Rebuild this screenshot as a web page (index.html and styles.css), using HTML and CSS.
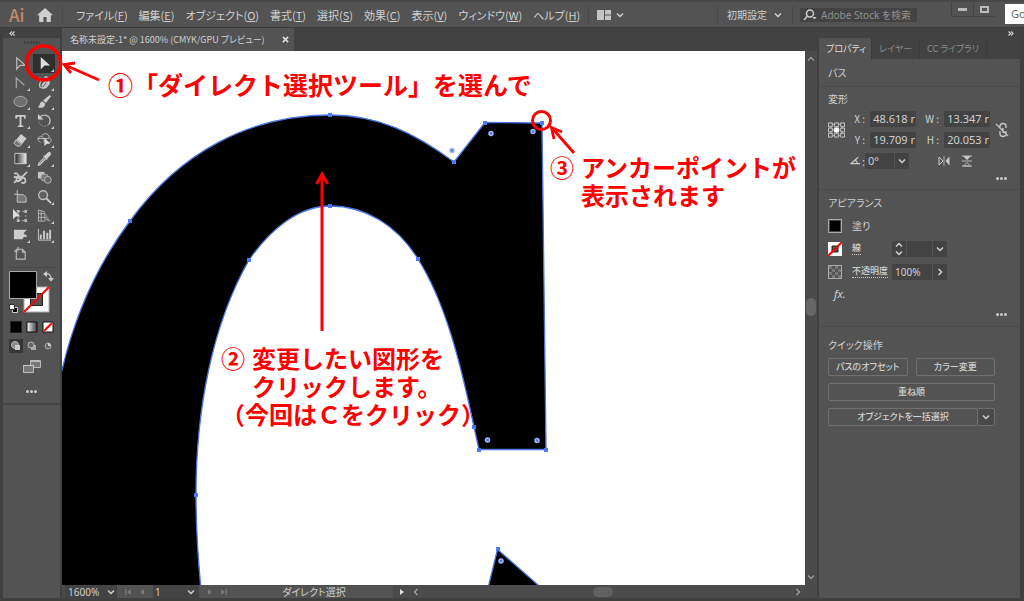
FILE: index.html
```html
<!DOCTYPE html>
<html lang="ja">
<head>
<meta charset="utf-8">
<title>名称未設定-1</title>
<link rel="stylesheet" href="styles.css">
</head>
<body>
<svg class="defs" aria-hidden="true">
  <defs>
    <symbol id="down" viewBox="0 0 8 8"><path d="M1 2.5 4 5.5 7 2.5" fill="none" stroke="currentColor" stroke-width="1.5"/></symbol>
    <symbol id="up" viewBox="0 0 8 8"><path d="M1 5.5 4 2.5 7 5.5" fill="none" stroke="currentColor" stroke-width="1.5"/></symbol>
    <symbol id="right" viewBox="0 0 8 8"><path d="M2.5 1 5.5 4 2.5 7" fill="none" stroke="currentColor" stroke-width="1.5"/></symbol>
    <symbol id="left" viewBox="0 0 8 8"><path d="M5.5 1 2.5 4 5.5 7" fill="none" stroke="currentColor" stroke-width="1.5"/></symbol>
    <symbol id="first" viewBox="0 0 8 8"><path d="M7 1v6L3 4zM1 1h1.3v6H1z" fill="currentColor"/></symbol>
    <symbol id="prev" viewBox="0 0 8 8"><path d="M6 1v6L2 4z" fill="currentColor"/></symbol>
    <symbol id="next" viewBox="0 0 8 8"><path d="M2 1v6l4-3z" fill="currentColor"/></symbol>
    <symbol id="last" viewBox="0 0 8 8"><path d="M1 1v6l4-3zM5.7 1H7v6H5.7z" fill="currentColor"/></symbol>
    <symbol id="none" viewBox="0 0 14 14"><path d="M0 0h14v14H0z" fill="#fff"/><path d="M4 4h6v6H4z" fill="#535353" stroke="#222"/><path d="M0 14 14 0" stroke="#f00" stroke-width="2"/></symbol>
    <linearGradient id="grad"><stop offset="0" stop-color="#222"/><stop offset="1" stop-color="#eee"/></linearGradient>
    <linearGradient id="grad-light"><stop offset="0" stop-color="#fff"/><stop offset="1" stop-color="#333"/></linearGradient>
  </defs>
</svg>

<div class="app">
  <header class="menubar">
    <span class="brand">Ai</span>
    <button class="home" aria-label="ホーム"><svg viewBox="0 0 16 14"><path d="M8 0 0 7.2h2.2V14h4.2V9h3.2v5h4.2V7.2H16z" fill="#d0d0d0"/></svg></button>
    <nav class="menus">
      <button>ファイル(<u>F</u>)</button><button>編集(<u>E</u>)</button><button>オブジェクト(<u>O</u>)</button><button>書式(<u>T</u>)</button><button>選択(<u>S</u>)</button><button>効果(<u>C</u>)</button><button>表示(<u>V</u>)</button><button>ウィンドウ(<u>W</u>)</button><button>ヘルプ(<u>H</u>)</button>
    </nav>
    <button class="arrange" aria-label="ドキュメントの配置"><svg class="layout-icon" viewBox="0 0 14 10"><path d="M0 0h7v10H0zM8 0h6v4.500H8zM8 5.500h6V10H8z" fill="#c4c4c4"/></svg><svg class="chev"><use href="#down"/></svg></button>
    <button class="workspace">初期設定<svg class="chev"><use href="#down"/></svg></button>
    <label class="stock"><svg viewBox="0 0 14 12"><circle cx="7" cy="4.500" r="3.500" fill="none" stroke="#ccc" stroke-width="1.500"/><path d="M4.500 7 1 11" stroke="#ccc" stroke-width="1.500"/><path d="M9.500 8h4l-2 2.500z" fill="#ccc"/></svg><input aria-label="Adobe Stock を検索" placeholder="Adobe Stock を検索"></label>
    <div class="window-buttons">
      <button aria-label="最小化"><i class="minimize"></i></button><button aria-label="元に戻す"><i class="restore"></i></button><span class="go">Go</span>
    </div>
  </header>

  <main class="workspace-area">
    <aside class="tools">
      <div class="collapse"><svg viewBox="0 0 6 5"><path d="M3 .5 1 2.500l2 2M5.500.500l-2 2 2 2" fill="none" stroke="#ccc" stroke-width="1.200"/></svg></div>
      <div class="grip"></div>
      <div class="tool-grid">
        <button aria-label="選択"><svg viewBox="0 0 16 16"><path d="M4 2v12l3.500-4H13z" fill="none" stroke="#bbb" stroke-width="1.300"/></svg></button>
        <button class="more active" aria-label="ダイレクト選択"><svg viewBox="0 0 16 16"><path d="M4 1v13.500l4-4.500h6z" fill="#ddd"/></svg></button>
        <button class="more" aria-label="アンカーポイント"><svg viewBox="0 0 16 16"><path d="M3.500 14V3L12 11" fill="none" stroke="#aaa" stroke-width="1.300"/></svg></button>
        <button class="more" aria-label="曲線"><svg viewBox="0 0 16 16"><path d="M1 6q1-4 3-2 1 2-1 5-1 5 2 4M8 3q3-3 3 1" fill="none" stroke="#c5c5c5" stroke-width="1.500"/><path d="m5 10 5-6 4-2-1 4 1 3-4 5-5 1z" fill="#c5c5c5"/><path d="m6 13 4-5" stroke="#535353"/></svg></button>
        <button class="more" aria-label="楕円形"><svg viewBox="0 0 16 16"><ellipse cx="8" cy="8" rx="7" ry="5.500" fill="#707070" stroke="#aaa"/></svg></button>
        <button class="more" aria-label="ブラシ"><svg viewBox="0 0 16 16"><path d="M13.500 1 6.500 7l3 2.500L15 2.500zM6 8C2.500 8 4 12 1 14c4 1.500 8 0 7.500-4z" fill="#ccc"/></svg></button>
        <button class="more" aria-label="文字"><svg viewBox="0 0 16 16"><path d="M2.500 2h11v4H12l-.500-2H9v9l2 .500V15H5v-1.500L7 13V4H4.500L4 6H2.500z" fill="#ccc"/></svg></button>
        <button class="more" aria-label="回転"><svg viewBox="0 0 16 16"><path d="M3 5a6 6 0 0 1 11 3 6 6 0 0 1-2 4.500" fill="none" stroke="#bbb" stroke-width="1.500"/><path d="M12 12.500A6 6 0 0 1 2 9" fill="none" stroke="#aaa" stroke-dasharray="1.500"/><path d="M1 1v6h6z" fill="#ccc"/></svg></button>
        <button class="more" aria-label="消しゴム"><svg viewBox="0 0 16 16"><path d="m8.500 2 6 5-5 6-6-5z" fill="#ccc"/><path d="m3 8.500 6 5-2 1.500H4l-3-3z" fill="#777" stroke="#ccc"/></svg></button>
        <button class="more" aria-label="シェイプ形成"><svg viewBox="0 0 16 16"><path d="M4 11C-1 9 1 4 5 5c1-5 8-4 8 1 3 1 3 5 0 5H9M1 7h12M5 5c3 1 3 4 2 6" fill="none" stroke="#bbb"/><path d="M8 6v9l2.500-2.500H14z" fill="#ddd"/></svg></button>
        <button class="more" aria-label="グラデーション"><svg viewBox="0 0 16 16"><path d="M2 2.500h12v11H2z" fill="url(#grad)" stroke="#ccc"/></svg></button>
        <button class="more" aria-label="スポイト"><svg viewBox="0 0 16 16"><path d="m8 5 3-3q2-2 3.500-.500T14 5l-3 3 .500.500-1 1-4-4 1-1z" fill="#ccc"/><path d="m8 7-6 6-.500 2L3 14.500l6-6" fill="none" stroke="#ccc" stroke-width="1.300"/></svg></button>
        <button aria-label="パペットワープ"><svg viewBox="0 0 16 16"><path d="M1 3.500h3l3 3.500h3l5-5M1 8q3-2 3 1T1 13.500M4 12q4 0 6-4 4 0 3 5-2 2-4 0" fill="none" stroke="#c5c5c5" stroke-width="1.900"/><path d="m4 7 5 3" stroke="#c5c5c5" stroke-width="3"/></svg></button>
        <button aria-label="ブレンド"><svg viewBox="0 0 16 16"><path d="M1 2h7v7H1z" fill="#c5c5c5"/><rect x="4.500" y="4.500" width="7" height="7" rx="2" fill="#777" stroke="#aaa"/><circle cx="11.500" cy="10.500" r="3.700" fill="#666" stroke="#bbb"/></svg></button>
        <button aria-label="アートボード"><svg viewBox="0 0 16 16"><path d="M1 5.500h5M4.500 1v5M4.500 6H11l3 3v5H4.500z" fill="#777" stroke="#c5c5c5"/></svg></button>
        <button class="more" aria-label="ズーム"><svg viewBox="0 0 16 16"><circle cx="6.500" cy="6.500" r="4.700" fill="#606060" stroke="#bbb" stroke-width="1.500"/><path d="m10 10 5 5" stroke="#ccc" stroke-width="2"/></svg></button>
        <button aria-label="自由変形"><svg viewBox="0 0 16 16"><path d="M5.500 3.500h8v10h-8z" fill="none" stroke="#bbb" stroke-dasharray="2"/><path d="M4 2h3v3H4zM12 2h3v3h-3zM4 12h3v3H4zM12 12h3v3h-3z" fill="#bbb"/><path d="M0 1v11l3-3h5z" fill="#ddd"/></svg></button>
        <button class="more" aria-label="遠近グリッド"><svg viewBox="0 0 16 16"><path d="M1.500 2v12H8V4zM1.500 6H8M1.500 10H8M4.500 3v11" fill="none" stroke="#b5b5b5"/><path d="m8 4 7 10H8z" fill="#777"/><path d="m8 9 5 5" stroke="#aaa"/></svg></button>
        <button class="more" aria-label="画像切り抜き"><svg viewBox="0 0 16 16"><path d="M1 3h14q-5 4-3 5 2-1 3 3-4-2-5 2H1z" fill="#ccc"/></svg></button>
        <button class="more" aria-label="グラフ"><svg viewBox="0 0 16 16"><path d="M1.500 2v12H15" fill="none" stroke="#ccc"/><path d="M3 8h2v5H3zM6.500 4h2v9h-2zM10 6h2v7h-2zM13 3h2v10h-2z" fill="#ccc"/></svg></button>
        <button aria-label="ページ"><svg viewBox="0 0 16 16"><path d="M3.500 3.500H10l3 3V14H3.500zM1 5.500h4M5.500 1v4M10 3.500v3h3" fill="none" stroke="#bbb" stroke-width="1.200"/></svg></button>
      </div>
      <div class="paint">
        <svg viewBox="0 0 48 46" role="img" aria-label="塗りと線">
          <path d="M16 17h25v25H16z" fill="#fff" stroke="#aaa"/><path d="M22.500 23.500h12v12h-12z" fill="#535353" stroke="#222"/><path d="M16 42 41 17" stroke="#f00" stroke-width="2"/>
          <path d="M1.500 1.500h27v27h-27z" fill="#000" stroke="#aaa"/>
          <path d="M37 4q6-1 6 5" fill="none" stroke="#bbb" stroke-width="1.500"/><path d="m35 4 4-3v6zM40 8h6l-3 3.500z" fill="#ccc"/>
          <path d="M4.500 37.500h5v5h-5z" fill="#000" stroke="#ccc"/><path d="M1.500 34.500h5v5h-5z" fill="#fff" stroke="#333"/>
        </svg>
      </div>
      <div class="modes">
        <button aria-label="カラー"><svg viewBox="0 0 14 14"><path d="M1.500 1.500h11v11h-11z" fill="#000" stroke="#222"/></svg></button>
        <button aria-label="グラデーション"><svg viewBox="0 0 14 14"><path d="M2 2h10v10H2z" fill="url(#grad-light)" stroke="#111"/></svg></button>
        <button aria-label="なし"><svg viewBox="0 0 14 14"><path d="M2 2h10v10H2z" fill="#fff" stroke="#111"/><path d="m3 11 8-8" stroke="#f00" stroke-width="2"/></svg></button>
      </div>
      <div class="modes draw">
        <button class="on" aria-label="標準描画"><svg viewBox="0 0 14 14"><circle cx="6" cy="6" r="3.500" fill="#888" stroke="#bbb"/><path d="M6 6h5v5H6z" fill="#ccc"/></svg></button>
        <button aria-label="背面描画"><svg viewBox="0 0 14 14"><path d="M6 6h5v5H6z" fill="#aaa"/><circle cx="6" cy="6" r="3" fill="#666" stroke="#bbb"/></svg></button>
        <button aria-label="内側描画"><svg viewBox="0 0 14 14"><circle cx="7" cy="7" r="3" fill="#666" stroke="#aaa"/><path d="M7 4v3h3q-1-3-3-3" fill="#ccc"/></svg></button>
      </div>
      <button class="screen" aria-label="スクリーンモード"><svg viewBox="0 0 18 13"><path d="M7.500.500h10v7h-10z" fill="#777" stroke="#bbb"/><path d="M7 1.500h11M.5 6v6.500h10V5.500H.5z" fill="#777" stroke="#bbb"/><path d="M0 5.500h11" stroke="#ccc"/></svg></button>
      <button class="dots" aria-label="ツールバーを編集"><i></i><i></i><i></i></button>
    </aside>

    <section class="document">
      <div class="tabbar"><div class="doc-tab">名称未設定-1* @ 1600% (CMYK/GPU プレビュー)<button aria-label="閉じる"><svg viewBox="0 0 8 8"><path d="m1 1 6 6M7 1 1 7" stroke="#ddd" stroke-width="1.800"/></svg></button></div></div>
      <div class="view">
        <svg class="artboard" viewBox="62 51 743 534" preserveAspectRatio="xMinYMin slice" role="img" aria-label="文字Cのパス">
          <g stroke="#4a76e0" stroke-width="1.300">
            <path d="M56 585V392Q58 385 62 370C75 315 97 265 130 221C180 152 250 115 330 115C378 115 415 133 454 162L485 122.500L542 123L546 449.500H479L474 427C460 360 445 302 418 259C397 225 365 206 330 206C298 206 270 230 249 260C212 325 196 410 196 495C196 527 198 558 201 590H56z"/>
            <path d="M497.500 549.500 546 592H487z"/>
          </g>
          <path d="M128 219h4v4h-4zM328 113h4v4h-4zM452 160h4v4h-4zM483 121h4v4h-4zM540 121h4v4h-4zM544 448h4v4h-4zM477 448h4v4h-4zM472 425h4v4h-4zM416 257h4v4h-4zM328 204h4v4h-4zM247 258h4v4h-4zM194 493h4v4h-4zM496 547h4v4h-4z" fill="#4a7af5"/>
          <g fill="#5578d8" stroke="#9db5ff" stroke-width="1.500"><circle cx="452" cy="150.500" r="2"/><circle cx="491" cy="133.500" r="2"/><circle cx="533" cy="131.500" r="2"/><circle cx="487.500" cy="440" r="2"/><circle cx="537" cy="440.500" r="2"/><circle cx="501" cy="561" r="2"/></g>
        </svg>
        <div class="vscroll"><svg class="chev"><use href="#up"/></svg><i></i><svg class="chev"><use href="#down"/></svg></div>
      </div>
      <div class="status">
        <label class="zoom"><input aria-label="ズーム" value="1600%"><svg class="chev"><use href="#down"/></svg></label>
        <div class="pager"><svg><use href="#first"/></svg><svg><use href="#prev"/></svg></div>
        <label class="page"><input aria-label="アートボード" value="1"><svg class="chev"><use href="#down"/></svg></label>
        <div class="pager"><svg><use href="#next"/></svg><svg><use href="#last"/></svg></div>
        <div class="current">ダイレクト選択</div>
        <svg class="play"><use href="#next"/></svg>
        <div class="hscroll"><svg class="chev"><use href="#left"/></svg><i></i><svg class="chev"><use href="#right"/></svg></div>
      </div>
    </section>

    <aside class="panel">
      <div class="collapse end"><svg viewBox="0 0 6 5"><path d="m.5.500 2 2-2 2M3 .5l2 2-2 2" fill="none" stroke="#ccc" stroke-width="1.200"/></svg></div>
      <div class="tabs"><button class="selected">プロパティ</button><button>レイヤー</button><button>CC ライブラリ</button></div>
      <div class="kind">パス</div>
      <section class="block transform">
        <h2>変形</h2>
        <div class="transform-body">
          <svg class="refpoint" viewBox="0 0 18 18"><path d="M3 3h12v12H3zM9 3v12M3 9h12" stroke="#bbb" fill="none"/><g fill="#535353" stroke="#ccc"><path d="M.5 1.500h4v4h-4zM7 1.500h4v4H7zM13.500 1.500h4v4h-4zM.5 7h4v4h-4zM13.500 7h4v4h-4zM.5 12.500h4v4h-4zM7 12.500h4v4H7zM13.500 12.500h4v4h-4z"/></g><path d="M6.500 6.500h5v5h-5z" fill="#fff"/></svg>
          <div class="fields">
            <label for="x">X :</label><input id="x" value="48.618 r"><label for="w">W :</label><input id="w" value="13.347 r">
            <label for="y">Y :</label><input id="y" value="19.709 r"><label for="h">H :</label><input id="h" value="20.053 r">
          </div>
          <button class="link" aria-label="縦横比を固定"><svg viewBox="0 0 14 16"><path d="M5 7V4.500a3 3 0 0 1 6 0V6M5 9v2.500a3 3 0 0 0 6 0V9M8 6v5M1 2l12 12" fill="none" stroke="#c5c5c5" stroke-width="1.400"/></svg></button>
        </div>
        <div class="angle-row">
          <label for="angle"><svg viewBox="0 0 12 9"><path d="M9 1 1 8h10M5 4.500q3 0 3 3.500" fill="none" stroke="#ccc" stroke-width="1.300"/></svg>:</label>
          <span class="combo"><input id="angle" value="0°"><button aria-label="角度の候補"><svg class="chev"><use href="#down"/></svg></button></span>
          <button class="flip" aria-label="水平方向に反転"><svg viewBox="0 0 12 12"><path d="M1 2v8l4-4z" fill="none" stroke="#ccc"/><path d="M11.500 1.500v9L7.500 6z" fill="#ccc"/><path d="M6 1v10" stroke="#aaa"/></svg></button>
          <button class="flip" aria-label="垂直方向に反転"><svg viewBox="0 0 12 12"><path d="M2 1h8L6 5z" fill="#ccc"/><path d="M2.500 11h7L6 7.500zM1 1h10M1 11h10M1 6h10" fill="none" stroke="#bbb"/></svg></button>
        </div>
        <button class="dots" aria-label="詳細オプション"><i></i><i></i><i></i></button>
      </section>
      <section class="block appearance">
        <h2>アピアランス</h2>
        <div class="row"><span class="swatch fill"></span><span>塗り</span></div>
        <div class="row"><svg class="swatch none"><use href="#none"/></svg><label for="stroke" class="dotted">線</label>
          <span class="combo stroke"><span class="spin"><svg class="chev"><use href="#up"/></svg><svg class="chev"><use href="#down"/></svg></span><input id="stroke"><button aria-label="線幅の候補"><svg class="chev"><use href="#down"/></svg></button></span></div>
        <div class="row"><span class="swatch checker"></span><label for="opacity" class="dotted">不透明度</label>
          <span class="combo opacity"><input id="opacity" value="100%"><button aria-label="不透明度スライダー"><svg class="chev"><use href="#right"/></svg></button></span></div>
        <button class="fx">fx.</button>
        <button class="dots" aria-label="アピアランスパネル"><i></i><i></i><i></i></button>
      </section>
      <section class="block quick">
        <h2>クイック操作</h2>
        <div class="actions">
          <button>パスのオフセット</button><button>カラー変更</button>
          <button class="wide">重ね順</button>
          <div class="wide split"><button>オブジェクトを一括選択</button><button aria-label="選択オプション"><svg class="chev"><use href="#down"/></svg></button></div>
        </div>
      </section>
    </aside>
  </main>

  <svg class="marks" aria-hidden="true">
    <g fill="none" stroke="#f00">
      <circle cx="43.500" cy="63" r="17" stroke-width="3.500"/>
      <path d="M99 80 65 65M75 63 64 64.500 71 73" stroke-width="2.800"/>
      <path d="M322 331V176M316.500 184 322 174l5.500 10" stroke-width="3"/>
      <circle cx="541.500" cy="120.500" r="9" stroke-width="3"/>
      <path d="M574 153 552 128M554 139 551.500 127.500 562 132" stroke-width="2.800"/>
    </g>
  </svg>
  <p class="note step-1">①「ダイレクト選択ツール」を選んで</p>
  <div class="note step-2"><span>②</span><p>変更したい図形を<br>クリックします。</p><p class="aside">（今回はＣをクリック）</p></div>
  <div class="note step-3"><span>③</span><p>アンカーポイントが<br>表示されます</p></div>
</div>
</body>
</html>
```
FILE: styles.css
```css
* { box-sizing: border-box; }
body { margin: 0; background: #404040; color: #d0d0d0; font: 11px/16px "Noto Sans CJK JP", "Noto Sans", sans-serif; font-feature-settings: "palt"; }
button, input { margin: 0; padding: 0; border: 0; background: none; color: inherit; font: inherit; font-feature-settings: inherit; }
input { min-width: 0; font-family: "Noto Sans", "Noto Sans CJK JP", sans-serif; }
button { display: flex; align-items: center; justify-content: center; white-space: nowrap; }
svg { display: block; }
p { margin: 0; }
h2 { margin: 0; font-size: 10px; line-height: 16px; font-weight: 400; }
.defs { position: absolute; width: 0; height: 0; }
.chev { width: 8px; height: 8px; flex: none; }
.app { position: relative; display: flex; flex-direction: column; height: 100vh; overflow: hidden; padding: 0 4px 3px 3px; }

.menubar { display: flex; align-items: center; height: 28px; flex: none; margin: 0 -4px 0 -3px; padding-left: 9px; background: #535353; border-top: 2px solid #484848; border-bottom: 1px solid #3c3c3c; }
.brand { width: 28px; color: #c48b66; font: 500 17px/24px "Noto Sans CJK JP", sans-serif; }
.home { width: 16px; height: 14px; }
.home svg { width: 16px; height: 14px; }
.menus { display: flex; gap: 11px; margin-left: 9px; padding-left: 13px; border-left: 1px solid #494949; }
.arrange { gap: 5px; height: 18px; margin-left: 8px; padding-left: 8px; border-left: 1px solid #494949; }
.layout-icon { width: 14px; height: 10px; }
.workspace { gap: 7px; height: 18px; margin-left: auto; padding: 0 10px 0 9px; border-left: 1px solid #494949; border-right: 1px solid #494949; font-size: 10px; }
.stock { display: flex; align-items: center; gap: 4px; width: 117px; height: 14px; margin: 0 34px 0 7px; padding-left: 3px; background: #434343; }
.stock svg { width: 14px; height: 12px; flex: none; }
.stock input { width: 94px; height: 14px; font-size: 10px; }
.stock input::placeholder { color: #909090; opacity: 1; }
.window-buttons { display: flex; align-self: stretch; }
.window-buttons button { width: 22px; height: 15px; border: solid #444; border-width: 0 0 1px 1px; }
.minimize { width: 9px; height: 3px; background: #bbb; }
.restore { width: 9px; height: 7px; border: 2px solid #bbb; }
.go { width: 19px; height: 20px; margin: 2px 0 0 10px; padding-left: 6px; background: #fff; color: #666; font: 11px/20px "Noto Sans", sans-serif; overflow: hidden; }

.workspace-area { display: flex; flex: 1; min-height: 0; }
.collapse { display: flex; align-items: center; height: 10px; padding: 0 6px; background: #424242; }
.collapse svg { width: 6px; height: 5px; }
.end { justify-content: flex-end; }
.tools { display: flex; flex-direction: column; align-items: center; width: 57px; flex: none; margin-right: 2px; background: #535353; }
.tools .collapse { width: 100%; }
.grip { width: 16px; height: 3px; margin: 3px 0 10px; background: repeating-linear-gradient(90deg, #424242 0 2px, #535353 2px 3px); }
.tool-grid { display: grid; grid-template-columns: 22px 22px; grid-auto-rows: 19px; column-gap: 2px; margin-left: 1px; }
.tool-grid button { position: relative; }
.tool-grid svg { width: 15px; height: 15px; }
.active { background: #2e2e2e; }
.more::after { content: ""; position: absolute; right: 1px; bottom: 1px; border: solid; border-width: 0 0 3px 3px; border-color: transparent transparent #ccc; }
.paint { width: 48px; margin-top: 4px; padding-top: 2px; border-top: 1px solid #494949; }
.paint svg { width: 48px; height: 46px; }
.modes { display: flex; gap: 2px; margin-top: 3px; padding: 1px 0; }
.modes button { width: 14px; height: 14px; }
.modes svg { width: 14px; height: 14px; }
.draw { margin-top: 3px; }
.on { background: #363636; }
.screen { margin-top: 6px; }
.screen svg { width: 18px; height: 13px; }
.dots { gap: 1px; height: 4px; }
.dots i { width: 3px; height: 3px; border-radius: 2px; background: #ccc; }
.tools .dots { width: 100%; height: 14px; margin-top: 12px; padding-bottom: 2px; box-shadow: 0 4px #535353, 0 6px #454545; }

.document { display: flex; flex-direction: column; flex: 1; min-width: 0; margin-right: 2px; }
.tabbar { display: flex; height: 23px; flex: none; background: #424242; }
.doc-tab { display: flex; align-items: center; gap: 17px; padding: 0 5px 0 8px; background: #535353; font-size: 9px; white-space: nowrap; }
.doc-tab svg { width: 7px; height: 7px; }
.view { display: flex; flex: 1; min-height: 0; }
.artboard { flex: 1; min-width: 0; height: 100%; background: #fff; }
.vscroll { display: flex; flex-direction: column; align-items: center; justify-content: space-between; width: 12px; padding: 4px 0; background: #4a4a4a; color: #999; }
.vscroll i { width: 10px; height: 18px; border-radius: 5px; background: #666; }
/* The thumb sits slightly above the middle of its track. */
.vscroll i { margin-bottom: 22px; }
.status { display: flex; align-items: center; height: 13px; flex: none; background: #4b4b4b; font-size: 10px; line-height: 12px; }
.zoom, .page { display: flex; align-items: center; justify-content: space-between; height: 13px; background: #434343; }
.zoom { width: 52px; margin-left: 3px; padding: 0 2px 0 3px; }
.page { width: 46px; padding: 0 4px 0 2px; }
.zoom input, .page input { flex: 1; height: 13px; }
.pager { display: flex; align-items: center; justify-content: center; gap: 6px; width: 36px; height: 13px; color: #777; background: #535353; }
.pager svg, .play { width: 8px; height: 8px; }
.current { width: 158px; text-align: center; background: #535353; }
.play { margin-left: 5px; color: #ddd; }
.hscroll { display: flex; align-items: center; justify-content: space-between; flex: 1; height: 12px; padding: 0 15px 0 6px; color: #999; }
.hscroll i { width: 20px; height: 10px; margin-right: 8px; border-radius: 5px; background: #616161; }

.panel { width: 201px; flex: none; background: #535353; }
.tabs { display: flex; height: 21px; background: #424242; color: #8b8b8b; font-size: 9px; }
.tabs button { padding: 0 7px; border-right: 1px solid #3b3b3b; }
.tabs .selected { padding: 0 5px 0 7px; background: #535353; color: #ddd; }
.kind { height: 28px; padding: 6px 9px; border-bottom: 1px solid #4a4a4a; font-size: 10px; }
.block { padding: 4px 9px 0; border-bottom: 1px solid #4a4a4a; }
.transform { height: 103px; }
.transform-body { display: flex; align-items: center; margin-top: 4px; }
.refpoint { width: 17px; height: 18px; flex: none; }
.fields { display: grid; grid-template-columns: 16px 46px 18px 46px; column-gap: 5px; row-gap: 5px; margin-left: 4px; text-align: right; font-size: 10px; }
.fields label { white-space: nowrap; }
.fields input { width: 46px; height: 16px; padding: 0 1px; background: #434343; border-radius: 2px; font-size: 11px; text-align: right; }
.link { margin-left: 5px; }
.link svg { width: 14px; height: 16px; }
.angle-row { display: flex; align-items: center; height: 17px; margin: 4px 0 0 22px; }
.angle-row label { display: flex; align-items: center; gap: 1px; width: 15px; line-height: 12px; }
.angle-row label svg { width: 11px; height: 9px; }
.combo { display: flex; height: 16px; background: #434343; border-radius: 2px; }
.combo button { width: 15px; border-left: 1px solid #535353; }
.combo input { width: 29px; padding-left: 3px; }
.flip { margin-left: 29px; }
.flip + .flip { margin-left: 11px; }
.flip svg { width: 12px; height: 12px; }
.panel .dots { margin: 10px 4px 0 auto; }
.panel .transform .dots { margin-top: 7px; }
.appearance { height: 137px; padding-top: 5px; }
.row { display: flex; align-items: center; height: 23px; font-size: 10px; }
h2 + .row { margin-top: 3px; }
.swatch { width: 14px; height: 14px; margin-right: 10px; flex: none; border: 1px solid #aaa; }
.none { border: 0; }
.fill { background: #000; box-shadow: inset 0 0 0 1px #444; }
.checker { background: conic-gradient(#555 25%, #777 0 50%, #555 0 75%, #777 0) 0 0 / 6px 6px; }
.dotted { border-bottom: 1px dotted #ccc; line-height: 12px; font-weight: 500; font-size: 9px; }
.row .combo { width: 55px; margin-left: auto; margin-right: 64px; }
.spin { display: flex; flex-direction: column; width: 14px; align-items: center; }
.combo #stroke { width: 26px; border-left: 1px solid #535353; }
.combo #opacity { width: 40px; }
.fx { margin: 3px 0 0 6px; font: italic 11px/16px "Noto Sans", sans-serif; }
.quick { border-bottom: 0; padding-top: 10px; }
.actions { display: grid; grid-template-columns: 1fr 1fr; gap: 7px 8px; margin: 5px 16px 0 0; font-size: 9px; font-weight: 500; }
.actions button { height: 18px; border: 1px solid #707070; border-radius: 2px; }
.wide { grid-column: 1 / 3; }
.split { display: flex; }
.split button:first-child { flex: 1; }
.split button:last-child { width: 18px; margin-left: -1px; background: #4a4a4a; }

/* Tutorial annotations lie over the application window. */
.marks { position: absolute; left: 0; top: 0; width: 100%; height: 100%; pointer-events: none; }
.note { position: absolute; color: #f00; font: 700 24px/28px "Noto Sans CJK JP", sans-serif; font-feature-settings: normal; white-space: nowrap; }
.step-1 { left: 108px; top: 70px; font-size: 25px; }
.step-2 { left: 221px; top: 344px; display: grid; grid-template-columns: 31px auto; }
.aside { grid-column: 1 / 3; }
.step-3 { left: 550px; top: 153px; display: grid; grid-template-columns: 31px auto; }
```
